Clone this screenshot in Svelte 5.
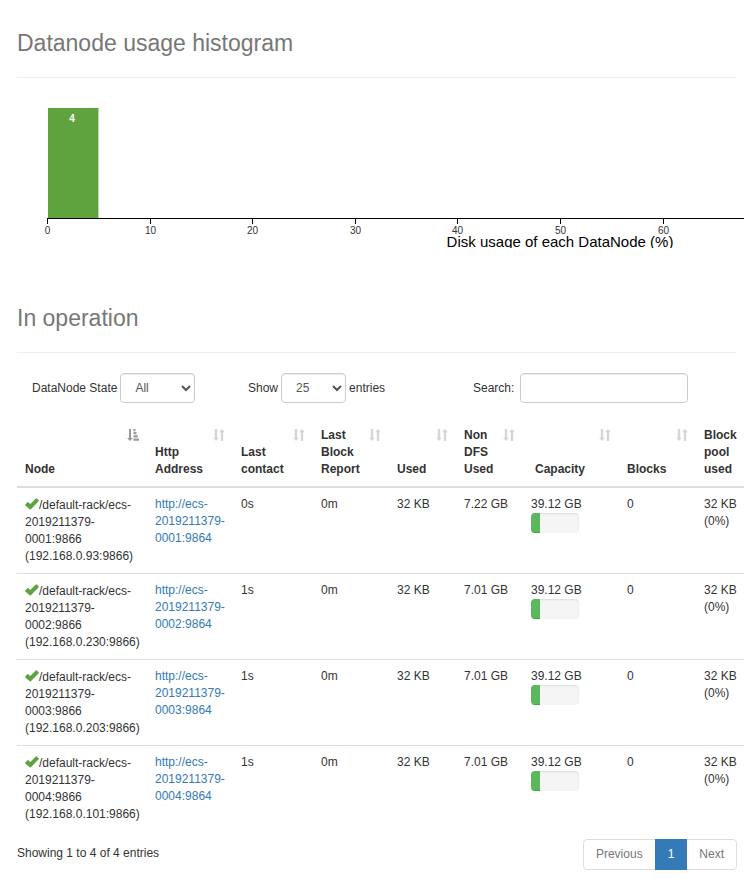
<script>
  const ticks = [0, 10, 20, 30, 40, 50, 60];
  const plotWidth = 1026;
  const tickX = (value) => Math.round((value / 100) * plotWidth) + 0.5;

  const columns = [
    { label: 'Node', cls: 'node', sort: 'asc' },
    { label: 'Http Address', cls: 'http', sort: 'both' },
    { label: 'Last contact', cls: 'contact', sort: 'both' },
    { label: 'Last Block Report', cls: 'report', sort: 'both' },
    { label: 'Used', cls: 'used', sort: 'both' },
    { label: 'Non DFS Used', cls: 'nondfs', sort: 'both' },
    { label: 'Capacity', cls: 'capacity', sort: 'both' },
    { label: 'Blocks', cls: 'blocks', sort: 'both' },
    { label: 'Block pool used', cls: 'pool', sort: 'none' }
  ];

  const nodes = [
    { id: '0001', ip: '192.168.0.93', contact: '0s', nonDfs: '7.22 GB', fill: 19 },
    { id: '0002', ip: '192.168.0.230', contact: '1s', nonDfs: '7.01 GB', fill: 19 },
    { id: '0003', ip: '192.168.0.203', contact: '1s', nonDfs: '7.01 GB', fill: 19 },
    { id: '0004', ip: '192.168.0.101', contact: '1s', nonDfs: '7.01 GB', fill: 19 }
  ];

  let nodeState = $state('All');
  let pageSize = $state('25');
  let query = $state('');
</script>

<main>
  <h1>Datanode usage histogram</h1>

  <div class="chart">
    <svg width="1086" height="150" role="img" aria-label="Disk usage of each DataNode (%)">
      <g transform="translate(30 10)">
        <rect x="1" y="0" width="50.4" height="110" fill="#5fa33e" />
        <text class="count" x="25" y="14">4</text>
        <path d="M0.5 116V110.5H1026.5V116" fill="none" stroke="#000" />
        {#each ticks as value}
          <line x1={tickX(value)} x2={tickX(value)} y1="110" y2="116" stroke="#000" />
          <text class="tick" x={tickX(value)} y="126">{value}</text>
        {/each}
        <text class="axis" x="513" y="139">Disk usage of each DataNode (%)</text>
      </g>
    </svg>
  </div>

  <h1>In operation</h1>

  <div class="controls">
    <div class="control">
      <label for="state">DataNode State</label>
      <select id="state" class="wide" bind:value={nodeState}>
        <option>All</option>
        <option>In service</option>
        <option>Down</option>
      </select>
    </div>
    <div class="control">
      <label for="size">Show</label>
      <select id="size" bind:value={pageSize}>
        <option>25</option>
        <option>50</option>
        <option>100</option>
      </select>
      <span>entries</span>
    </div>
    <div class="control search">
      <label for="search">Search:</label>
      <input id="search" type="search" bind:value={query} />
    </div>
  </div>

  <table>
    <thead>
      <tr>
        {#each columns as col}
          <th class={col.cls} scope="col">
            {col.label}
            {#if col.sort === 'asc'}
              <svg class="sort active" viewBox="0 0 12 12" aria-hidden="true">
                <path d="M2 0h2v9h2L3 12 0 9h2zM6.500 0h2v2.200h-2zM6.500 3.100h3v2.200h-3zM6.500 6.300h4.200v2.200h-4.200zM6.500 9.500h5.500v2.200h-5.500z" />
              </svg>
            {:else if col.sort === 'both'}
              <svg class="sort" viewBox="0 0 12 12" aria-hidden="true">
                <path d="M1.800 0h2.400v8.800h1.800L3 12 0 8.800h1.800zM7.800 12h2.400V3.200h1.800L9 0 6 3.200h1.800z" />
              </svg>
            {/if}
          </th>
        {/each}
      </tr>
    </thead>
    <tbody>
      {#each nodes as node}
        <tr>
          <td class="name">
            <svg class="check" viewBox="0 0 14 12" aria-hidden="true">
              <path d="M0.300 6.600 2.300 4.300Q2.800 3.900 3.300 4.300L5.300 6.100 10.800 0.400Q11.300 0 11.800 0.400L13.700 2.200Q14 2.700 13.700 3.200L5.900 11.200Q5.300 11.700 4.700 11.200L0.300 7.500Q0 7 0.300 6.600Z" />
            </svg>/default-rack/ecs-2019211379-{node.id}:9866 ({node.ip}:9866)
          </td>
          <td><a href="http://ecs-2019211379-{node.id}:9864">http://ecs-2019211379-{node.id}:9864</a></td>
          <td>{node.contact}</td>
          <td>0m</td>
          <td>32 KB</td>
          <td>{node.nonDfs}</td>
          <td>
            39.12 GB
            <div class="progress"><div class="bar" style:width="{node.fill}%"></div></div>
          </td>
          <td>0</td>
          <td>32 KB (0%)</td>
        </tr>
      {/each}
    </tbody>
  </table>

  <footer>
    <span class="info">Showing 1 to 4 of 4 entries</span>
    <nav aria-label="Pages">
      <button type="button">Previous</button>
      <button type="button" class="current" aria-current="page">1</button>
      <button type="button">Next</button>
    </nav>
  </footer>
</main>

<style>
  :global(body) {
    background: #fff;
  }

  main {
    box-sizing: border-box;
    padding: 28px 7px 23px 17px;
    overflow: hidden;
    font-family: 'Liberation Sans', Arial, sans-serif;
    font-size: 12px;
    line-height: 17px;
    color: #333;
  }

  h1 {
    margin: 0 0 20px;
    padding-bottom: 19px;
    border-bottom: 1px solid #eee;
    font-size: 23px;
    font-weight: 400;
    line-height: 30px;
    color: #777;
  }

  .chart {
    height: 150px;
    margin-bottom: 55px;
  }

  .chart svg {
    display: block;
    overflow: hidden;
  }

  .chart text {
    text-anchor: middle;
  }

  .tick {
    font-size: 10px;
    fill: #333;
  }

  .count {
    font-size: 10px;
    font-weight: 700;
    fill: #fff;
  }

  .axis {
    font-size: 15px;
    fill: #000;
  }

  .controls {
    display: grid;
    grid-template-columns: 216fr 225fr 279fr;
    margin-bottom: 16px;
  }

  .control {
    display: flex;
    align-items: center;
    gap: 3px;
    padding-left: 15px;
  }

  .search {
    gap: 6px;
  }

  select,
  input {
    box-sizing: border-box;
    height: 30px;
    border: 1px solid #ccc;
    border-radius: 4px;
    background: #fff;
    box-shadow: inset 0 1px 1px rgba(0, 0, 0, 0.075);
    color: #555;
    font: inherit;
    margin: 0;
    padding: 5px 10px;
  }

  select {
    width: 65px;
    padding-right: 4px;
  }

  select.wide {
    width: 75px;
  }

  input {
    width: 168px;
  }

  table {
    width: 100%;
    min-width: 756px;
    table-layout: fixed;
    border-collapse: separate;
    border-spacing: 0;
  }

  .node { width: 130px; }
  .http { width: 86px; }
  .contact { width: 80px; }
  .report { width: 76px; }
  .used { width: 67px; }
  .nondfs { width: 67px; }
  .capacity { width: 96px; }
  .blocks { width: 77px; }

  th,
  td {
    box-sizing: border-box;
    padding: 8px;
    text-align: left;
  }

  th {
    position: relative;
    padding-right: 30px;
    border-bottom: 2px solid #ddd;
    vertical-align: bottom;
  }

  th.capacity {
    text-align: center;
  }

  th.node,
  th.report,
  th.pool {
    padding-right: 20px;
  }

  .sort {
    position: absolute;
    top: 10px;
    right: 8px;
    width: 12px;
    height: 12px;
    fill: #d6d6d6;
  }

  .sort.active {
    fill: #999;
  }

  td {
    vertical-align: top;
  }

  tr + tr td {
    border-top: 1px solid #ddd;
  }

  .name {
    padding-right: 4px;
    padding-top: 9px;
  }

  .check {
    width: 14px;
    height: 12px;
    vertical-align: -1px;
    fill: #5fa341;
  }

  a {
    color: #337ab7;
    text-decoration: none;
  }

  .progress {
    width: 60%;
    height: 20px;
    overflow: hidden;
    border-radius: 4px;
    background: #f5f5f5;
    box-shadow: inset 0 1px 2px rgba(0, 0, 0, 0.1);
  }

  .bar {
    height: 100%;
    background: #5cb85c;
    box-shadow: inset 0 -1px 0 rgba(0, 0, 0, 0.15);
  }

  footer {
    display: flex;
    justify-content: space-between;
    padding-top: 8px;
  }

  .info {
    padding-top: 6px;
  }

  nav {
    display: flex;
  }

  button {
    margin: 0 0 0 -1px;
    padding: 6px 12px;
    border: 1px solid #ddd;
    background: #fff;
    color: #777;
    font: inherit;
    cursor: pointer;
  }

  button:first-child {
    border-radius: 4px 0 0 4px;
  }

  button:last-child {
    border-radius: 0 4px 4px 0;
  }

  .current {
    position: relative;
    border-color: #337ab7;
    background: #337ab7;
    color: #fff;
  }
</style>
